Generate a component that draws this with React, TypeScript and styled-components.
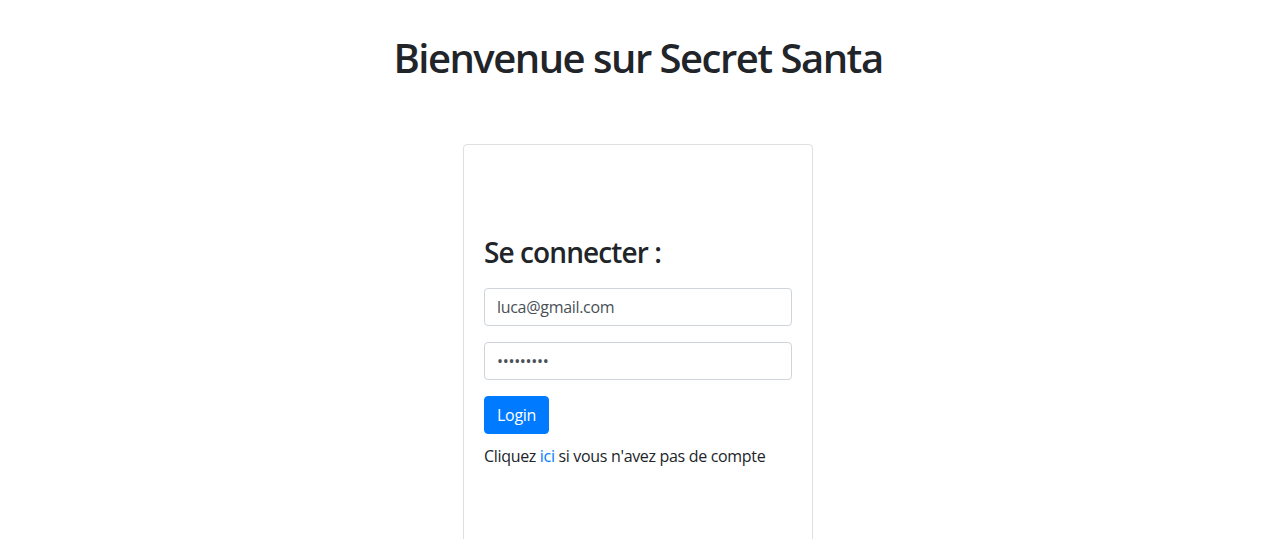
import React from "react";
import styled, { createGlobalStyle } from "styled-components";

const Global = createGlobalStyle`
  html, body { margin: 0; padding: 0; background: #fff; }
  body {
    font-family: "Open Sans", "Noto Sans", sans-serif;
    color: #212529;
    font-size: 16px;
    line-height: 1.5;
  }
  * { box-sizing: border-box; }
`;

const Page = styled.div`
  display: flex;
  flex-direction: column;
  align-items: center;
  padding: 34px 2px 0 0;
`;

const Title = styled.h1`
  margin: 0 0 62px;
  font-size: 40px;
  font-weight: 600;
  line-height: 48px;
  letter-spacing: -1.5px;
`;

const Card = styled.div`
  width: 350px;
  min-height: 440px;
  border: 1px solid rgba(0, 0, 0, 0.125);
  border-radius: 4px;
  padding: 90px 20px 20px;
`;

const Heading = styled.h3`
  margin: 0 0 19px;
  font-size: 28px;
  font-weight: 600;
  line-height: 34px;
  letter-spacing: -0.9px;
`;

const Input = styled.input`
  display: block;
  width: 100%;
  height: 38px;
  padding: 6px 12px;
  margin-bottom: 16px;
  font-family: inherit;
  font-size: 16px;
  line-height: 24px;
  color: #495057;
  border: 1px solid #ced4da;
  border-radius: 4px;
  outline: none;
  letter-spacing: -0.3px;
`;

const Button = styled.button`
  display: block;
  height: 38px;
  padding: 6px 12px;
  font-family: inherit;
  font-size: 16px;
  line-height: 24px;
  color: #fff;
  background: #007bff;
  border: 1px solid #007bff;
  border-radius: 4px;
  letter-spacing: -0.3px;
`;

const Note = styled.p`
  margin: 10px 0 0;
  font-size: 16px;
  line-height: 24px;
  letter-spacing: -0.32px;
`;

const Link = styled.a`
  color: #007bff;
  text-decoration: none;
`;

export default function App() {
  return (
    <>
      <Global />
      <Page>
        <Title>Bienvenue sur Secret Santa</Title>
        <Card>
          <Heading>Se connecter :</Heading>
          <form onSubmit={(e) => e.preventDefault()}>
            <Input type="email" defaultValue="luca@gmail.com" />
            <Input type="password" defaultValue="123456789" />
            <Button type="submit">Login</Button>
          </form>
          <Note>
            Cliquez <Link href="#">ici</Link> si vous n'avez pas de compte
          </Note>
        </Card>
      </Page>
    </>
  );
}
